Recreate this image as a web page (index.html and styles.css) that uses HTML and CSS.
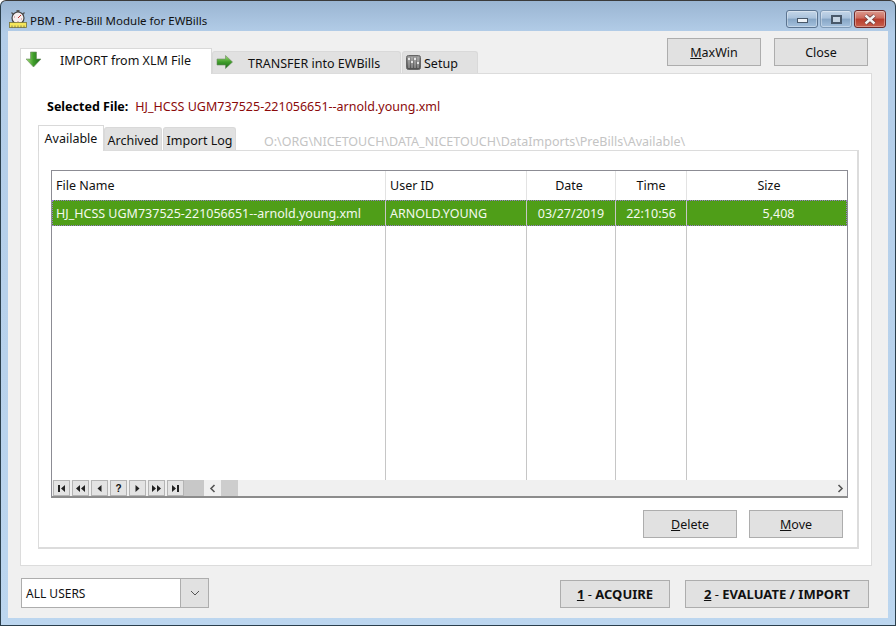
FILE: index.html
```html
<!DOCTYPE html>
<html lang="en">
<head>
<meta charset="utf-8">
<title>PBM - Pre-Bill Module for EWBills</title>
<link rel="stylesheet" href="styles.css">
</head>
<body>
<div class="window">
  <header class="titlebar">
    <svg class="app-icon" width="18" height="18" viewBox="0 0 18 18">
      <rect x="7.500" y="0" width="3" height="2" fill="#555"/>
      <path d="M2.500 2.500 4.500 4.500M15.500 2.500 13.500 4.500" stroke="#555" stroke-width="1.300"/>
      <circle cx="9" cy="8" r="6" fill="#f6eeee" stroke="#444" stroke-width="1.200"/>
      <path d="M9 8 12 5" stroke="#c03030" stroke-width="1"/>
      <path d="M5 7h1M12 9h1M9 11v1" stroke="#c08080" stroke-width="1"/>
      <rect x=".5" y="12.500" width="17" height="5" fill="#f5e65a" stroke="#77733a" stroke-width=".8"/>
      <path d="M3 15.500v2M6 15.500v2M9 15.500v2M12 15.500v2M15 15.500v2" stroke="#555" stroke-width=".7"/>
    </svg>
    <span class="title">PBM - Pre-Bill Module for EWBills</span>
    <div class="win-controls">
      <span class="win-btn win-min"><i></i></span>
      <span class="win-btn win-max"><i></i></span>
      <span class="win-btn win-close">
        <svg width="16" height="11" viewBox="0 0 16 11"><path d="M3.500 1.500 12.500 9.500M12.500 1.500 3.500 9.500" stroke="#6b3a3a" stroke-width="4"/><path d="M3.500 1.500 12.500 9.500M12.500 1.500 3.500 9.500" stroke="#f4f4f4" stroke-width="2.400"/></svg>
      </span>
    </div>
  </header>

  <main class="client">
    <div class="top-row">
      <nav class="tabs">
        <div class="tab tab-active">
          <svg width="16" height="17" viewBox="0 0 16 17">
            <defs><linearGradient id="gd" x1="0" y1="0" x2="1" y2="0"><stop offset="0" stop-color="#a5e07a"/><stop offset=".5" stop-color="#3f9d2a"/><stop offset="1" stop-color="#1d6b1d"/></linearGradient></defs>
            <path d="M4.500 1h6v7h4.500l-7.500 8L0 8h4.500z" fill="url(#gd)" stroke="#6d8a62" stroke-width=".6"/>
          </svg>
          <span>IMPORT from XLM File</span>
        </div>
        <div class="tab tab-transfer">
          <svg width="17" height="15" viewBox="0 0 17 15">
            <defs><linearGradient id="gr" x1="0" y1="0" x2="0" y2="1"><stop offset="0" stop-color="#a5e07a"/><stop offset=".5" stop-color="#3f9d2a"/><stop offset="1" stop-color="#1d6b1d"/></linearGradient></defs>
            <path d="M1 4h8.500V.500L16.500 7 9.500 13.500V10H1z" fill="url(#gr)" stroke="#6d8a62" stroke-width=".6"/>
          </svg>
          <span>TRANSFER into EWBills</span>
        </div>
        <div class="tab tab-setup">
          <svg width="15" height="15" viewBox="0 0 15 15">
            <defs><linearGradient id="gs" x1="0" y1="0" x2="0" y2="1"><stop offset="0" stop-color="#9a9a9a"/><stop offset="1" stop-color="#4c4c4c"/></linearGradient></defs>
            <rect x=".5" y=".5" width="14" height="14" rx="2" fill="url(#gs)" stroke="#666"/>
            <path d="M3 2v11M6 2v11M9 2v11M12 2v11" stroke="#c8c8c8" stroke-width=".8"/>
            <path d="M2 4h2M5 7h2M8 4h2M11 8h2" stroke="#fff" stroke-width="1.400"/>
          </svg>
          <span>Setup</span>
        </div>
      </nav>
      <div class="top-actions">
        <button class="btn"><u>M</u>axWin</button>
        <button class="btn">Close</button>
      </div>
    </div>

    <section class="page">
      <div class="selected-file">
        <strong>Selected File:</strong>
        <span class="file-value">HJ_HCSS UGM737525-221056651--arnold.young.xml</span>
      </div>

      <div class="sub-top">
        <div class="sub-tab sub-active">Available</div>
        <div class="sub-tab sub-archived">Archived</div>
        <div class="sub-tab sub-log">Import Log</div>
        <div class="path">O:\ORG\NICETOUCH\DATA_NICETOUCH\DataImports\PreBills\Available\</div>
      </div>

      <div class="sub-page">
        <div class="grid">
          <table class="grid-table">
            <colgroup>
              <col class="c-name"><col class="c-user"><col class="c-date"><col class="c-time"><col class="c-size">
            </colgroup>
            <thead>
              <tr>
                <th class="left">File Name</th>
                <th class="left">User ID</th>
                <th class="th-date">Date</th>
                <th>Time</th>
                <th class="th-size">Size</th>
              </tr>
            </thead>
            <tbody>
              <tr class="row-selected">
                <td class="left">HJ_HCSS UGM737525-221056651--arnold.young.xml</td>
                <td class="left">ARNOLD.YOUNG</td>
                <td>03/27/2019</td>
                <td>22:10:56</td>
                <td class="cell-size">5,408</td>
              </tr>
              <tr class="row-filler"><td></td><td></td><td></td><td></td><td></td></tr>
            </tbody>
          </table>
          <div class="grid-foot">
            <div class="navigator">
              <span class="nav-btn"><svg width="9" height="7" viewBox="0 0 9 7"><path d="M1 0h2v7H1zM8 0v7L4 3.500z"/></svg></span>
              <span class="nav-btn"><svg width="9" height="7" viewBox="0 0 9 7"><path d="M4 0v7L0 3.500zM9 0v7L5 3.500z"/></svg></span>
              <span class="nav-btn"><svg width="9" height="7" viewBox="0 0 9 7"><path d="M6.500 0v7l-4-3.500z"/></svg></span>
              <span class="nav-btn nav-q">?</span>
              <span class="nav-btn"><svg width="9" height="7" viewBox="0 0 9 7"><path d="M2.500 0v7l4-3.500z"/></svg></span>
              <span class="nav-btn"><svg width="9" height="7" viewBox="0 0 9 7"><path d="M0 0v7l4-3.500zM5 0v7l4-3.500z"/></svg></span>
              <span class="nav-btn"><svg width="9" height="7" viewBox="0 0 9 7"><path d="M1 0v7l4-3.500zM6 0h2v7H6z"/></svg></span>
              <span class="nav-fill"></span>
            </div>
            <div class="hscroll">
              <svg width="7" height="9" viewBox="0 0 7 9"><path d="M5.500 1 2 4.500 5.500 8" fill="none" stroke="#555" stroke-width="1.600"/></svg>
              <span class="thumb"></span>
              <svg class="chev-right" width="7" height="9" viewBox="0 0 7 9"><path d="M1.500 1 5 4.500 1.500 8" fill="none" stroke="#555" stroke-width="1.600"/></svg>
            </div>
          </div>
        </div>
        <div class="grid-actions">
          <button class="btn"><u>D</u>elete</button>
          <button class="btn"><u>M</u>ove</button>
        </div>
      </div>
    </section>

    <footer class="bottom">
      <div class="combo">
        <span class="combo-text">ALL USERS</span>
        <span class="combo-arrow"><svg width="10" height="6" viewBox="0 0 10 6"><path d="M1 1 5 5 9 1" fill="none" stroke="#555" stroke-width="1"/></svg></span>
      </div>
      <div class="bottom-actions">
        <button class="btn btn-bold btn-acquire"><u>1</u> <span class="dash">-</span> ACQUIRE</button>
        <button class="btn btn-bold btn-evaluate"><u>2</u> <span class="dash">-</span> EVALUATE / IMPORT</button>
      </div>
    </footer>
  </main>
</div>
</body>
</html>
```

FILE: styles.css
```css
* { box-sizing: border-box; }
html, body { margin: 0; padding: 0; }
body {
  width: 896px;
  height: 626px;
  overflow: hidden;
  font-family: "Noto Sans", "Open Sans", sans-serif;
  font-size: 12.5px;
  color: #111;
}
.window {
  width: 896px;
  height: 626px;
  display: flex;
  flex-direction: column;
  padding: 0 7px 7px;
  border: 1px solid #2b3f4c;
  border-top-color: #3a3a3a;
  border-radius: 6px 6px 0 0;
  background: linear-gradient(180deg, #9ab5d2 0, #b3cde8 32px, #bcd6ef 100%);
}
.titlebar {
  height: 30px;
  flex: none;
  display: flex;
  align-items: center;
}
.app-icon { margin: 5px 3px 0 1px; flex: none; }
.title { font-size: 11.5px; color: #111; margin-top: 9px; }
.win-controls {
  margin-left: auto;
  display: flex;
  gap: 2px;
  align-self: flex-start;
  margin-top: 9px;
  margin-right: 2px;
}
.win-btn {
  width: 32px;
  height: 18px;
  display: flex;
  align-items: center;
  justify-content: center;
  border: 1px solid #5b7491;
  border-radius: 3px;
  background: linear-gradient(180deg, #c4d6e8 0, #a9c2dc 45%, #86a5c5 50%, #a5c1de 100%);
  box-shadow: inset 0 0 0 1px rgba(255,255,255,.35);
}
.win-min i { width: 11px; height: 5px; margin-top: 3px; background: #eef3f8; border: 1px solid #48586a; }
.win-max { border-color: #7f9ab6; }
.win-max i { width: 11px; height: 9px; border: 2px solid #48586a; background: #c5d4e3; }
.win-close {
  border-color: #6e2a2a;
  background: linear-gradient(180deg, #dc9a8e 0, #cc6a5c 45%, #b73c2c 50%, #c8604e 100%);
}
.client {
  flex: 1;
  display: flex;
  flex-direction: column;
  background: #f0f0f0;
  padding: 7px 16px 10px 12px;
  min-height: 0;
}
.top-row {
  height: 35px;
  flex: none;
  display: flex;
  justify-content: space-between;
}
.tabs { display: flex; align-items: flex-end; }
.tab {
  height: 22px;
  display: flex;
  align-items: center;
  background: #e1e1e1;
  border: 1px solid #d9d9d9;
  border-bottom: 0;
  border-radius: 3px 3px 0 0;
}
.tab-active {
  width: 192px;
  height: 26px;
  background: #fff;
  border-radius: 0;
  padding-left: 5px;
  position: relative;
  z-index: 1;
  margin-bottom: -1px;
  align-items: flex-start;
}
.tab-active svg { margin-top: 2px; flex: none; }
.tab-active span { margin-left: 18px; margin-top: 3px; }
.tab-transfer { width: 189px; padding-left: 3px; }
.tab-transfer span { margin-left: 15px; margin-top: 1px; }
.tab-setup { width: 76px; margin-left: 1px; padding-left: 3px; }
.tab-setup span { margin-left: 3px; margin-top: 2px; }
.top-actions { display: flex; gap: 13px; margin-right: 4px; align-items: flex-start; }
.btn {
  width: 94px;
  height: 28px;
  padding: 0;
  font: inherit;
  color: #111;
  background: #e1e1e1;
  border: 1px solid #adadad;
}
.page {
  flex: 1;
  min-height: 0;
  background: #fff;
  border: 1px solid #dcdcdc;
  padding: 0 12px 16px 17px;
  display: flex;
  flex-direction: column;
}
.selected-file {
  height: 50px;
  flex: none;
  padding: 24px 0 0 9px;
  display: flex;
  gap: 7px;
}
.selected-file strong { font-weight: 700; color: #000; }
.file-value { color: #8b0a0a; }
.sub-top { height: 26px; flex: none; display: flex; align-items: flex-end; }
.sub-tab {
  height: 23px;
  background: #e1e1e1;
  border: 1px solid #d9d9d9;
  border-bottom: 0;
  border-radius: 3px 3px 0 0;
  text-align: center;
  padding-top: 4px;
}
.sub-active {
  width: 66px;
  height: 26px;
  background: #fff;
  border-radius: 0;
  margin-bottom: -1px;
  position: relative;
  z-index: 1;
  padding-top: 4px;
}
.sub-archived { width: 58px; }
.sub-log { width: 73px; margin-left: 1px; }
.path { color: #c4c4c4; margin-left: 28px; white-space: nowrap; }
.sub-page {
  flex: 1;
  min-height: 0;
  border: 1px solid #dcdcdc;
  border-width: 1px 2px 2px 1px;
  padding: 19px 10px 10px 12px;
  display: flex;
  flex-direction: column;
}
.grid {
  width: 797px;
  height: 328px;
  flex: none;
  border: 1px solid #8c8c94;
  border-bottom-width: 2px;
  border-bottom-color: #8c8c8c;
  display: flex;
  flex-direction: column;
  background: #fff;
}
.grid-table {
  flex: 1;
  width: 795px;
  height: 309px;
  border-collapse: separate;
  border-spacing: 0;
  table-layout: fixed;
}
.c-name { width: 334px; }
.c-user { width: 141px; }
.c-date { width: 89px; }
.c-time { width: 71px; }
.c-size { width: 160px; }
.grid-table th {
  height: 29px;
  font-weight: 400;
  text-align: center;
  border-right: 1px solid #e3e3e3;
  padding: 0 4px 1px;
}
.grid-table th:last-child, .grid-table td:last-child { border-right: 0; }
.grid-table .th-date { padding-right: 8px; }
.grid-table .th-size { padding-left: 8px; }
.grid-table td {
  text-align: center;
  border-right: 1px solid #c6c6c6;
  padding: 0 4px;
  white-space: nowrap;
}
.grid-table .left { text-align: left; }
.grid-table .cell-size { padding-left: 28px; }
.row-selected td {
  height: 26px;
  background: #4f9e18;
  color: #f4f9ee;
  border-top: 1px dotted #9a7ad0;
  border-bottom: 1px dotted #9a7ad0;
}
.grid-table .row-selected td:first-child { border-left: 1px dotted #9a7ad0; padding-left: 3px; }
.row-selected td:last-child { border-right: 1px dotted #9a7ad0; }
.grid-foot {
  height: 16px;
  flex: none;
  display: flex;
  background: #f0f0f0;
}
.navigator {
  width: 152px;
  flex: none;
  display: flex;
  gap: 2px;
  padding-left: 1px;
  background: #f0f0f0;
}
.nav-btn {
  width: 17px;
  height: 16px;
  display: flex;
  align-items: center;
  justify-content: center;
  background: #e3e3e3;
  border: 1px solid #b4b4b4;
  font-family: "Liberation Sans", sans-serif;
  color: #111;
}
.nav-btn svg { fill: #222; }
.nav-q { font-size: 10px; font-weight: 700; }
.nav-fill { flex: 1; background: #c8c8c8; margin-left: -2px; }
.hscroll { flex: 1; display: flex; align-items: center; padding-left: 5px; }
.hscroll .thumb { width: 17px; height: 16px; background: #cdcdcd; margin-left: 5px; }
.chev-right { margin-left: auto; margin-right: 3px; }
.grid-actions {
  display: flex;
  gap: 12px;
  margin-top: 12px;
  justify-content: flex-end;
  padding-right: 4px;
}
.bottom {
  flex: none;
  height: 30px;
  margin-top: 12px;
  display: flex;
  justify-content: space-between;
  align-items: flex-end;
}
.combo {
  width: 188px;
  height: 30px;
  margin-left: 1px;
  display: flex;
  background: #fff;
  border: 1px solid #adadad;
}
.combo-text { flex: 1; padding: 6px 0 0 4px; font-size: 12px; }
.combo-arrow {
  width: 28px;
  display: flex;
  align-items: center;
  justify-content: center;
  background: #e1e1e1;
  border-left: 1px solid #adadad;
}
.bottom-actions { display: flex; gap: 15px; margin-right: 3px; }
.btn-bold { font-weight: 700; font-size: 13px; }
.btn-bold .dash { font-weight: 400; }
.btn-acquire { width: 110px; }
.btn-evaluate { width: 184px; }
```
